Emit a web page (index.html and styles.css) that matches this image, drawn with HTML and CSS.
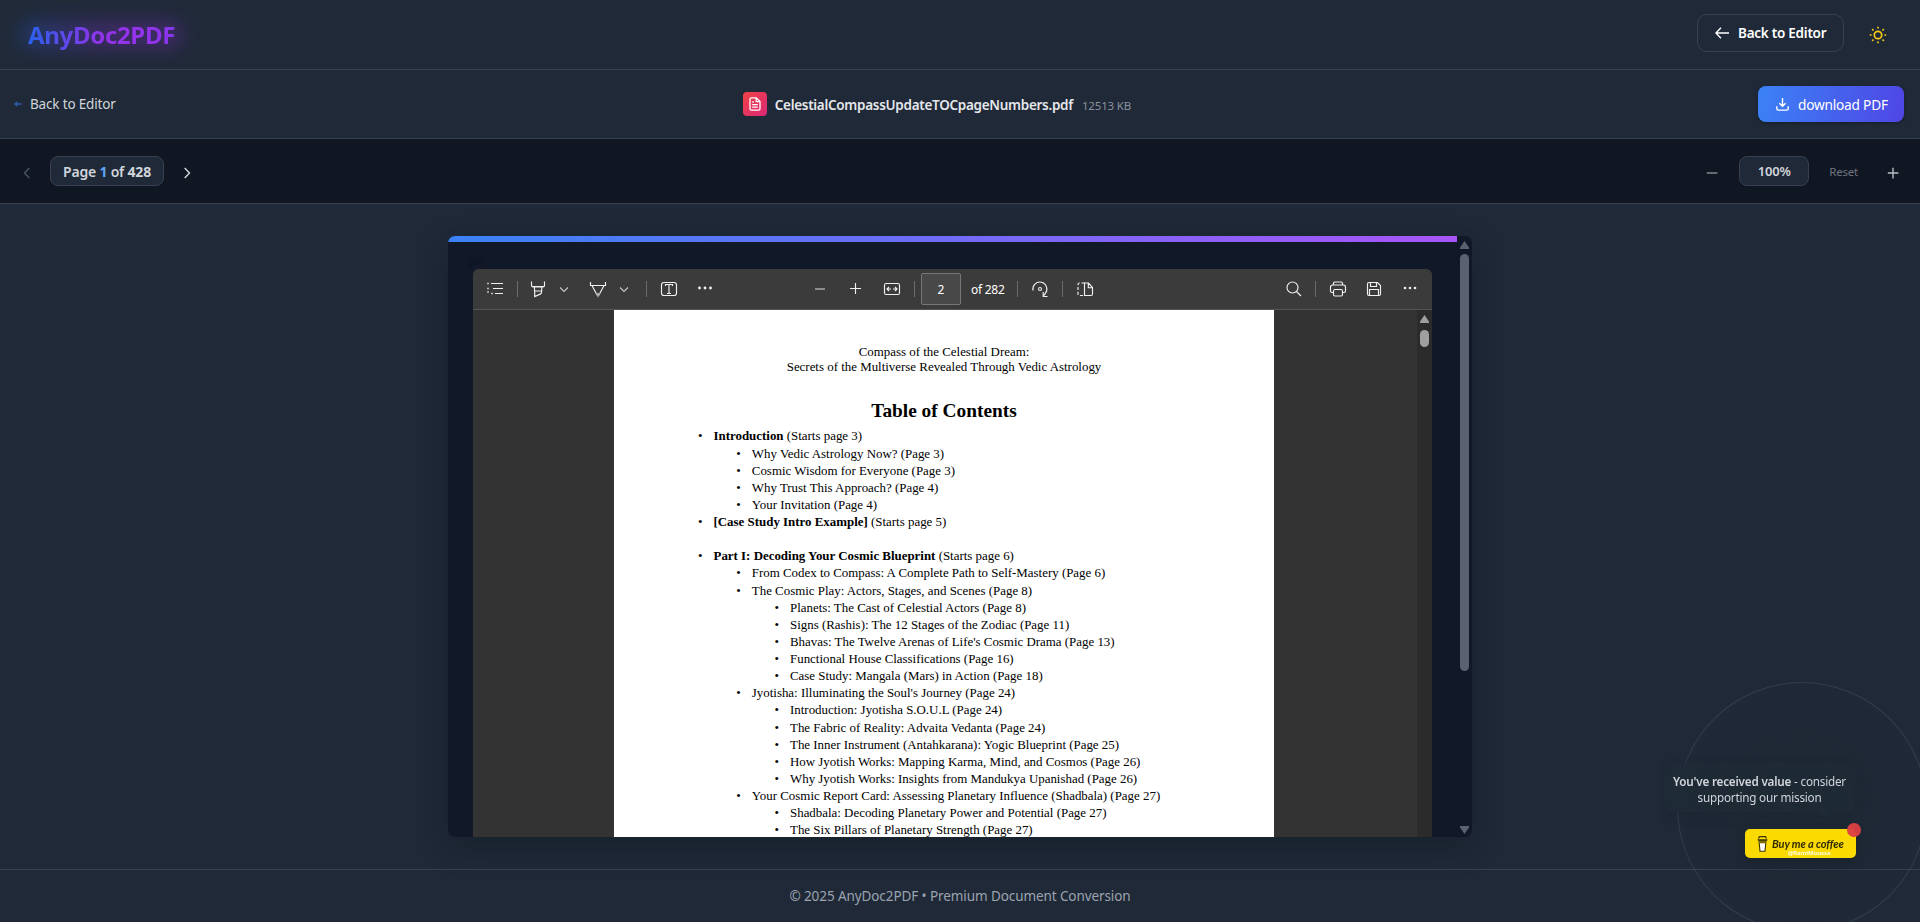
FILE: index.html
```html
<!DOCTYPE html>
<html lang="en">
<head>
<meta charset="utf-8">
<title>AnyDoc2PDF</title>
<link rel="stylesheet" href="styles.css">
</head>
<body>
<header class="site-header">
  <div class="logo">AnyDoc2PDF</div>
  <div class="header-actions">
    <button class="btn-outline">
      <svg width="14" height="12" viewBox="0 0 14 12" fill="none" stroke="#fff" stroke-width="1.4"><path d="M6 .8.9 6 6 11.2M1 6h13"/></svg>
      <span>Back to Editor</span>
    </button>
    <svg class="sun" width="18" height="18" viewBox="0 0 18 18" fill="none" stroke="#facc15" stroke-width="1.7"><circle cx="9" cy="9" r="3.7"/><path d="M9 .8v1.8M9 15.4v1.8M.8 9h1.8M15.4 9h1.8M3.2 3.2l1.3 1.3M13.5 13.5l1.3 1.3M3.2 14.8l1.3-1.3M13.5 4.5l1.3-1.3"/></svg>
  </div>
</header>

<section class="file-bar">
  <a class="back-link"><svg width="8" height="6" viewBox="0 0 8 6" fill="none" stroke="#2f5fb3" stroke-width="1.3"><path d="M3.5.6 1 3l2.5 2.4M1 3h6.5"/></svg><span>Back to Editor</span></a>
  <div class="file-info">
    <span class="file-icon"><svg width="12" height="14" viewBox="0 0 12 14" fill="none" stroke="#fff" stroke-width="1.3"><path d="M7.3.9H2.4C1.6.9 1 1.4 1 2.2v9.6c0 .8.6 1.3 1.4 1.3h7.2c.8 0 1.4-.5 1.4-1.3V4.5zM7.2 1v3.6H11M3.2 5h1.6M3.2 7.6h5.6M3.2 10.2h5.6"/></svg></span>
    <span class="file-name">CelestialCompassUpdateTOCpageNumbers.pdf</span>
    <span class="file-size">12513 KB</span>
  </div>
  <button class="btn-download">
    <svg width="13" height="13" viewBox="0 0 13 13" fill="none" stroke="#fff" stroke-width="1.4"><path d="M6.5 0v8M3.4 5.2l3.1 3.1 3.1-3.1M.8 8.3v2.3c0 .9.6 1.5 1.5 1.5h8.4c.9 0 1.5-.6 1.5-1.5V8.3"/></svg>
    <span>download PDF</span>
  </button>
</section>

<section class="page-bar">
  <div class="pager">
    <svg class="ctl" width="8" height="12" viewBox="0 0 8 12" fill="none" stroke="#4b5563" stroke-width="1.4"><path d="M6.3 1 1.5 6l4.8 5"/></svg>
    <div class="pill page-pill"><span>Page <b class="current">1</b> of <b>428</b></span></div>
    <svg class="ctl" width="8" height="12" viewBox="0 0 8 12" fill="none" stroke="#d1d5db" stroke-width="1.4"><path d="m1.700 1 4.800 5-4.800 5"/></svg>
  </div>
  <div class="zoomer">
    <svg class="ctl" width="12" height="12" viewBox="0 0 12 12" stroke="#8a909a" stroke-width="1.4"><path d="M.8 6h10.600"/></svg>
    <div class="pill zoom-pill">100%</div>
    <span class="reset">Reset</span>
    <svg class="ctl" width="12" height="12" viewBox="0 0 12 12" stroke="#b7bcc4" stroke-width="1.4"><path d="M.8 6h10.600M6 .8v10.600"/></svg>
  </div>
</section>

<main class="stage">
  <div class="card">
    <div class="card-body">
      <span class="gift">gift</span>
      <div class="stripe"></div>
      <div class="viewer">
        <div class="viewer-tools">
          <svg class="ic" viewBox="0 0 20 20"><path d="M5 4.500h12M7 9.500h10M9 14.500h8"/><path d="M1 4.500h2M1 9.500h2M1 13h2M5 14.500h2" stroke="#bbb" stroke-width="1.500"/></svg>
          <i class="sep g11"></i>
          <svg class="ic g10" viewBox="0 0 20 20"><path d="M3.500 2.500v4c0 .9.6 1.500 1.500 1.500h10c.9 0 1.500-.6 1.500-1.500v-4M3.500 7.500h13M6.500 8v4h7.200V8M6.700 12v5.500l5.500-2.400c.8-.3 1.300-.9 1.300-1.800V12"/></svg>
          <svg class="chev g10" viewBox="0 0 12 20"><path d="m2 8.500 4 4 4-4"/></svg>
          <svg class="ic g18" viewBox="0 0 20 20"><path d="M2.500 3v3.500h15V3M4 6.500 9 16h2l5-9.500"/><path d="M8.500 14.500 10 17.500l1.500-3z" fill="#aaa" stroke="#aaa"/></svg>
          <svg class="chev g10" viewBox="0 0 12 20"><path d="m2 8.500 4 4 4-4"/></svg>
          <i class="sep g16"></i>
          <svg class="ic g12" viewBox="0 0 20 20"><rect x="2.500" y="3.500" width="15" height="13" rx="2.500"/><path d="M6.500 7V5.500h7V7M10 5.500v9M8 14.500h4"/></svg>
          <svg class="ic g16 dots" viewBox="0 0 20 20"><circle cx="4.500" cy="9" r="1.400"/><circle cx="10" cy="9" r="1.400"/><circle cx="15.500" cy="9" r="1.400"/></svg>
          <svg class="ic g95" viewBox="0 0 20 20"><path d="M5 10h10" stroke="#aaa" stroke-width="1.600"/></svg>
          <svg class="ic g16" viewBox="0 0 20 20"><path d="M4 9.500h11M9.500 4v11"/></svg>
          <svg class="ic g16" viewBox="0 0 20 20"><rect x="2.500" y="4.500" width="15" height="11" rx="1.800"/><path d="M5 10h4M11 10h4M7 8l-2 2 2 2M13 8l2 2-2 2"/></svg>
          <i class="sep g12"></i>
          <span class="page-input">2</span>
          <span class="page-total">of 282</span>
          <i class="sep g12"></i>
          <svg class="ic g12" viewBox="0 0 20 20"><path d="M3 11.500A7 7 0 1 1 15.500 14.200L13.500 17M13.200 13v4.500h4.300"/><circle cx="10" cy="10" r="1.500"/></svg>
          <i class="sep g12"></i>
          <svg class="ic g12" viewBox="0 0 20 20"><path d="M9.500 4v12.500h6.500c.9 0 1.500-.6 1.500-1.500V8.500l-4-4.500zM13.300 4v4.700h4.200"/><path d="M9.500 4H4.500c-.9 0-1.500.6-1.500 1.500V15c0 .9.600 1.500 1.500 1.500h5" stroke-dasharray="3 1.800"/></svg>
          <svg class="ic push" viewBox="0 0 20 20"><circle cx="8.500" cy="8.500" r="5.500"/><path d="m12.500 12.500 4.500 4.500"/></svg>
          <i class="sep g11"></i>
          <svg class="ic g12" viewBox="0 0 20 20"><path d="M5.500 13.500H4c-.9 0-1.500-.6-1.500-1.500V8.200C2.500 7 3.500 6 4.700 6h10.600c1.200 0 2.200 1 2.200 2.200V12c0 .9-.6 1.500-1.500 1.500h-1.500M5.500 6V4.300c0-.7.500-1.300 1.300-1.300h6.400c.8 0 1.300.6 1.300 1.300V6"/><rect x="5.500" y="10.500" width="9" height="6.500" rx="1.500"/></svg>
          <svg class="ic g16" viewBox="0 0 20 20"><path d="M5 3.500h8.500l3 3V15c0 .9-.6 1.500-1.500 1.500H5c-.9 0-1.500-.6-1.500-1.500V5c0-.9.600-1.500 1.500-1.500zM6.500 3.500v4h6v-4M5.500 16.500v-6h9v6"/></svg>
          <svg class="ic g16 dots" viewBox="0 0 20 20"><circle cx="5" cy="9" r="1.300"/><circle cx="10" cy="9" r="1.300"/><circle cx="15" cy="9" r="1.300"/></svg>
        </div>
        <div class="viewer-body">
          <article class="sheet">
            <p class="book-title">Compass of the Celestial Dream:<br>Secrets of the Multiverse Revealed Through Vedic Astrology</p>
            <h1>Table of Contents</h1>
            <ul class="toc">
              <li><b>Introduction</b> (Starts page 3)</li>
              <li class="l2">Why Vedic Astrology Now? (Page 3)</li>
              <li class="l2">Cosmic Wisdom for Everyone (Page 3)</li>
              <li class="l2">Why Trust This Approach? (Page 4)</li>
              <li class="l2">Your Invitation (Page 4)</li>
              <li><b>[Case Study Intro Example]</b> (Starts page 5)</li>
              <li class="part"><b>Part I: Decoding Your Cosmic Blueprint</b> (Starts page 6)</li>
              <li class="l2">From Codex to Compass: A Complete Path to Self-Mastery (Page 6)</li>
              <li class="l2">The Cosmic Play: Actors, Stages, and Scenes (Page 8)</li>
              <li class="l3">Planets: The Cast of Celestial Actors (Page 8)</li>
              <li class="l3">Signs (Rashis): The 12 Stages of the Zodiac (Page 11)</li>
              <li class="l3">Bhavas: The Twelve Arenas of Life's Cosmic Drama (Page 13)</li>
              <li class="l3">Functional House Classifications (Page 16)</li>
              <li class="l3">Case Study: Mangala (Mars) in Action (Page 18)</li>
              <li class="l2">Jyotisha: Illuminating the Soul's Journey (Page 24)</li>
              <li class="l3">Introduction: Jyotisha S.O.U.L (Page 24)</li>
              <li class="l3">The Fabric of Reality: Advaita Vedanta (Page 24)</li>
              <li class="l3">The Inner Instrument (Antahkarana): Yogic Blueprint (Page 25)</li>
              <li class="l3">How Jyotish Works: Mapping Karma, Mind, and Cosmos (Page 26)</li>
              <li class="l3">Why Jyotish Works: Insights from Mandukya Upanishad (Page 26)</li>
              <li class="l2">Your Cosmic Report Card: Assessing Planetary Influence (Shadbala) (Page 27)</li>
              <li class="l3">Shadbala: Decoding Planetary Power and Potential (Page 27)</li>
              <li class="l3">The Six Pillars of Planetary Strength (Page 27)</li>
            </ul>
          </article>
          <div class="inner-scroll">
            <svg width="9" height="8" viewBox="0 0 9 8" fill="#9f9f9f"><path d="M4.500 0 9 6.500V8H0V6.500z"/></svg>
            <i></i>
          </div>
        </div>
      </div>
    </div>
    <div class="outer-scroll">
      <svg width="9" height="8" viewBox="0 0 9 8" fill="#5c6170"><path d="M4.500 0 9 6.500V8H0V6.500z"/></svg>
      <i></i>
      <svg class="down" width="9" height="8" viewBox="0 0 9 8" fill="#5c6170"><path d="M4.500 8 9 1.500V0H0v1.500z"/></svg>
    </div>
  </div>
</main>

<footer class="site-footer">© 2025 AnyDoc2PDF • Premium Document Conversion</footer>

<aside class="support">
  <div class="ring"></div>
  <div class="tip"><b>You've received value</b> - consider<br>supporting our mission</div>
  <div class="coffee">
    <svg width="11" height="16" viewBox="0 0 11 16"><path d="M2 4.500h7L8 15.200H3z" fill="#fff" stroke="#3b3300" stroke-width="1.100"/><path d="M2.300 4.500h6.400l-.3 2.800H2.600z" fill="#7d6c00"/><path d="M1.500 2.500 2.500.7h6l1 1.800M.6 3.800h9.800" fill="none" stroke="#3b3300" stroke-width="1.300"/></svg>
    <span class="coffee-text">Buy me a coffee</span>
    <span class="handle">@RamiMoussa</span>
    <i class="badge"></i>
  </div>
</aside>
</body>
</html>
```
FILE: styles.css
```css
* { box-sizing: border-box; }
body {
  margin: 0;
  width: 100%;
  height: 922px;
  overflow: hidden;
  display: flex;
  flex-direction: column;
  background: #1f2937;
  color: #d1d5db;
  font-family: "Noto Sans", "Open Sans", sans-serif;
}
svg { display: block; flex: none; }
button { font-family: inherit; border: 0; cursor: pointer; }

.site-header {
  height: 70px;
  flex: none;
  display: flex;
  align-items: center;
  justify-content: space-between;
  padding: 0 33px 4px 12px;
  border-bottom: 1px solid #374151;
}
.logo {
  margin-top: 3px;
  padding: 0 16px;
  font-size: 24px;
  font-weight: 700;
  letter-spacing: -0.32px;
  position: relative;
  z-index: 0;
  background: linear-gradient(90deg, #2563eb 8%, #9333ea 50%, #9333ea 75%, #7c3aed);
  -webkit-background-clip: text;
  background-clip: text;
  color: transparent;
}
.logo::before {
  content: "";
  position: absolute;
  z-index: -1;
  inset: 2px 8px;
  border-radius: 12px;
  background: linear-gradient(90deg, #2563eb, #9333ea 50%, #9333ea);
  filter: blur(10px);
  opacity: 0.27;
}
.header-actions { display: flex; align-items: center; gap: 25px; }
.btn-outline {
  width: 147px;
  height: 38px;
  display: flex;
  align-items: center;
  gap: 9px;
  padding: 0 0 0 17px;
  background: transparent;
  border: 1px solid #374151;
  border-radius: 10px;
  color: #fff;
  font-size: 13.5px;
  font-weight: 600;
  letter-spacing: -0.25px;
}
.sun { margin-top: 4px; }

.file-bar {
  height: 69px;
  flex: none;
  display: flex;
  align-items: center;
  justify-content: space-between;
  padding: 0 16px 0 14px;
  border-bottom: 1px solid #374151;
}
.back-link {
  display: flex;
  align-items: center;
  gap: 8px;
  font-size: 13.5px;
  letter-spacing: -0.17px;
}
.file-info { display: flex; align-items: center; }
.file-icon {
  width: 24px;
  height: 24px;
  margin-right: 8px;
  display: grid;
  place-items: center;
  border-radius: 4px;
  background: linear-gradient(135deg, #ef4444, #db2777);
}
.file-name { font-size: 13.5px; font-weight: 600; letter-spacing: -0.29px; color: #e5e7eb; margin: 1px 9px 0 0; }
.file-size { font-size: 11.5px; letter-spacing: -0.19px; color: #8b929e; padding-top: 2px; }
.btn-download {
  width: 146px;
  height: 36px;
  display: flex;
  align-items: center;
  gap: 9px;
  padding: 0 0 0 18px;
  border-radius: 8px;
  background: linear-gradient(100deg, #3b82f6, #4f46e5);
  box-shadow: 0 1px 3px rgba(0, 0, 0, 0.3);
  color: #fff;
  font-size: 13.7px;
  letter-spacing: -0.22px;
}

.page-bar {
  height: 65px;
  flex: none;
  display: flex;
  align-items: center;
  justify-content: space-between;
  padding: 0 21px 0 23px;
  background: #111722;
  border-bottom: 1px solid #374151;
}
.pager, .zoomer { display: flex; align-items: center; }
.ctl { margin-top: 4px; }
.pill {
  height: 30px;
  display: flex;
  align-items: center;
  justify-content: center;
  background: #1f2937;
  border: 1px solid #374151;
  border-radius: 8px;
  font-weight: 600;
}
.page-pill { width: 114px; margin: 0 19px; font-size: 14px; letter-spacing: -0.2px; }
.page-pill b { font-weight: 700; }
.current { color: #60a5fa; }
.zoom-pill { width: 70px; margin-left: 21px; font-size: 13px; letter-spacing: -0.2px; }
.reset { margin: 0 29px 0 20px; font-size: 11.500px; letter-spacing: -0.2px; color: #6f7580; }

.stage { height: 665px; flex: none; padding: 32px 0; display: flex; justify-content: center; }
.card {
  width: 1024px;
  height: 601px;
  display: flex;
  overflow: hidden;
  border-radius: 7px;
  background: #111827;
  box-shadow: 0 10px 30px rgba(10, 20, 25, 0.3);
}
.card-body { width: 1009px; position: relative; }
.gift { position: absolute; left: 20px; top: 20px; font-size: 9px; line-height: 12px; color: #0e1420; }
.stripe { height: 6px; background: linear-gradient(90deg, #3b82f6, #a855f7); }
.viewer {
  width: 959px;
  height: 568px;
  margin: 27px 0 0 25px;
  display: flex;
  flex-direction: column;
  overflow: hidden;
  border-radius: 6px 6px 0 0;
  background: #333;
}
.viewer-tools {
  height: 41px;
  flex: none;
  display: flex;
  align-items: center;
  padding: 0 12px 0 13px;
  background: #3b3b3b;
  border-bottom: 1px solid #555;
}
.ic, .chev { width: 20px; height: 20px; fill: none; stroke: #f0f0f0; stroke-width: 1.15; }
.chev { width: 12px; stroke: #c4c4c4; }
.dots { fill: #f0f0f0; stroke: none; }
.sep { width: 1px; height: 16px; flex: none; background: #6b6b6b; }
.g10 { margin-left: 10px; }
.g11 { margin-left: 11px; }
.g12 { margin-left: 12px; }
.g16 { margin-left: 16px; }
.g18 { margin-left: 18px; }
.g95 { margin-left: 95px; }
.push { margin-left: auto; }
.page-input {
  width: 40px;
  height: 32px;
  margin: 0 10px 0 6px;
  display: grid;
  place-items: center;
  border: 1px solid #777;
  border-radius: 2px;
  background: #484848;
  color: #fff;
  font-size: 12px;
}
.page-total { width: 34px; font-size: 12px; letter-spacing: -0.25px; color: #fff; white-space: nowrap; }

.viewer-body { flex: 1; min-height: 0; display: flex; }
.sheet {
  width: 660px;
  margin-left: 141px;
  padding-top: 34px;
  overflow: hidden;
  background: #fff;
  color: #000;
  font-family: "Liberation Serif", "Times New Roman", serif;
  font-size: 12.92px;
}
.book-title { margin: 0; line-height: 15px; text-align: center; }
.sheet h1 { margin: 25.5px 0 5.3px; font-size: 19.35px; line-height: 22px; text-align: center; }
.toc { list-style: none; margin: 0; padding: 0 0 0 84px; line-height: 17.13px; white-space: nowrap; }
.toc li::before { content: "•"; display: inline-block; width: 15.5px; }
.toc .l2 { padding-left: 38.3px; }
.toc .l3 { padding-left: 76.5px; }
.toc .part { margin-top: 17.13px; }
.toc { padding-top: 0.7px; }
.inner-scroll {
  width: 15px;
  margin-left: auto;
  padding: 5px 3px;
  background: #2b2b2b;
}
.inner-scroll i { display: block; width: 9px; height: 17px; margin-top: 7px; border-radius: 5px; background: #9f9f9f; }
.outer-scroll { width: 15px; padding: 5px 3px 3px; display: flex; flex-direction: column; }
.outer-scroll i { width: 9px; height: 417px; margin-top: 5px; border-radius: 5px; background: #5c6170; }
.outer-scroll .down { margin-top: auto; }

.site-footer {
  flex: 1;
  padding-top: 16px;
  border-top: 1px solid #374151;
  text-align: center;
  font-size: 13.5px;
  line-height: 20px;
  letter-spacing: -0.09px;
  color: #9ca3af;
}

/* Floating support widget, anchored to the lower right corner */
.support { position: fixed; right: 0; bottom: 0; width: 260px; height: 245px; overflow: hidden; }
.ring {
  position: absolute;
  left: 17px;
  top: 5px;
  width: 250px;
  height: 250px;
  border: 1px solid rgba(100, 116, 139, 0.28);
  border-radius: 50%;
  background: radial-gradient(circle, rgba(30, 42, 51, 0.6), rgba(31, 41, 55, 0) 68%);
}
.tip {
  position: absolute;
  left: 4px;
  top: 86px;
  width: 191px;
  height: 49px;
  padding-top: 10px;
  border-radius: 8px;
  background: rgba(30, 42, 52, 0.8);
  box-shadow: 0 4px 12px rgba(20, 30, 35, 0.18);
  text-align: center;
  font-size: 11.7px;
  line-height: 16px;
  letter-spacing: -0.2px;
  color: #d1d5db;
  white-space: nowrap;
}
.tip::after {
  content: "";
  position: absolute;
  right: 21px;
  bottom: -6px;
  border: 7px solid transparent;
  border-width: 6px 8px 0;
  border-top-color: #1e2a34;
}
.tip b { font-weight: 600; }
.coffee {
  position: absolute;
  left: 85px;
  top: 152px;
  width: 111px;
  height: 29px;
  padding-left: 12px;
  display: flex;
  align-items: center;
  gap: 4px;
  border-radius: 5px;
  background: #fada00;
  box-shadow: 0 3px 10px rgba(15, 23, 32, 0.35);
}
.coffee-text {
  font: italic 700 11px "Lato", cursive;
  letter-spacing: -0.1px;
  color: #302a00;
  white-space: nowrap;
}
.handle { position: absolute; left: 43px; top: 21px; font-size: 6px; line-height: 6px; font-weight: 700; color: #fffbe0; letter-spacing: -0.1px; }
.badge { position: absolute; right: -5px; top: -6px; width: 14px; height: 14px; border-radius: 50%; background: rgba(220, 63, 68, 0.96); }
```
